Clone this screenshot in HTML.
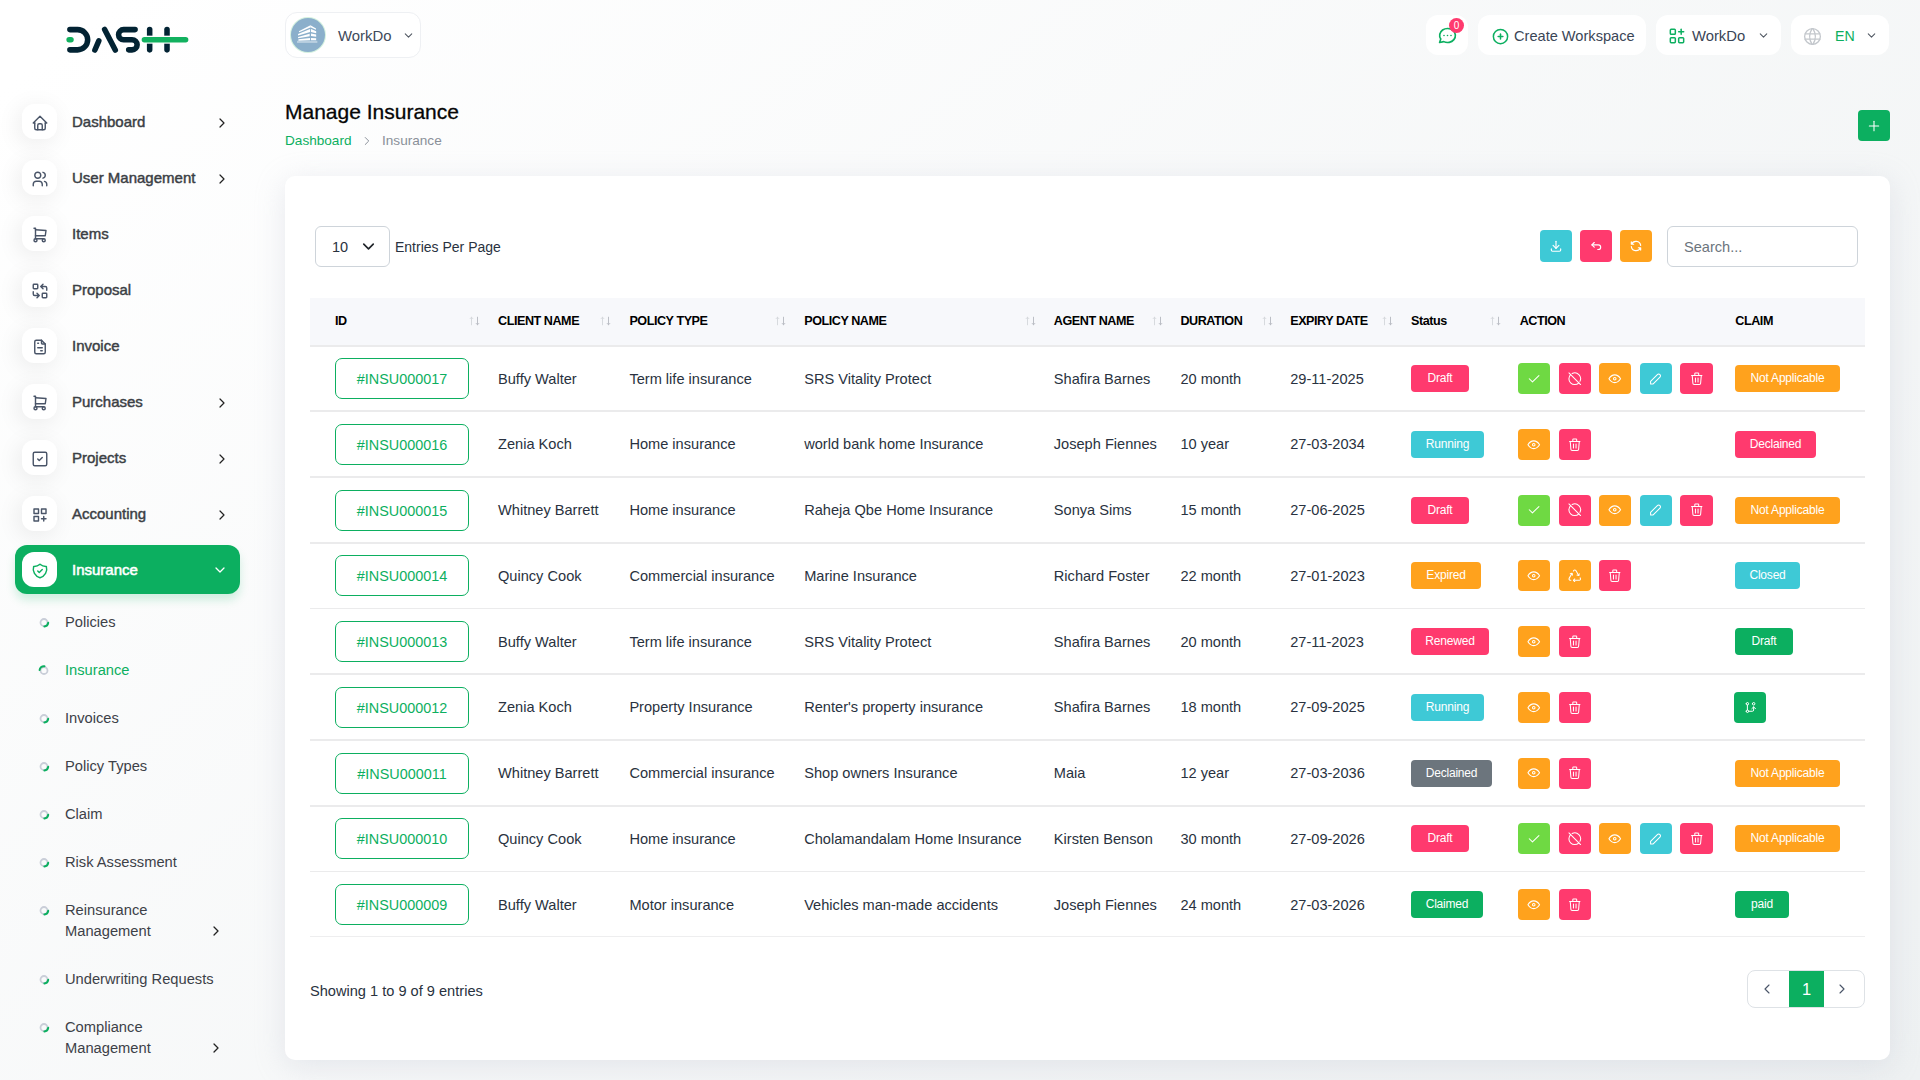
<!DOCTYPE html><html><head><meta charset="utf-8"><style>

*{box-sizing:border-box;margin:0;padding:0}
html,body{width:1920px;height:1080px;overflow:hidden}
body{font-family:"Liberation Sans", sans-serif;color:#293240;position:relative;
background:linear-gradient(141.55deg, #ffffff 3.46%, #eef1f2 99.86%);}
.abs{position:absolute}
.mi{position:absolute;left:22px;width:35px;height:35px;border-radius:12px;background:#fff;
box-shadow:-3px 4px 23px rgba(0,0,0,0.08);display:flex;align-items:center;justify-content:center}
.mt{position:absolute;left:72px;font-size:15px;font-weight:400;-webkit-text-stroke:0.45px #3b3f45;color:#3b3f45;white-space:nowrap;line-height:20px;letter-spacing:0px}
.ma{position:absolute;left:213px}
.st{position:absolute;left:65px;font-size:14.7px;color:#3d4148;white-space:nowrap;line-height:21px}
.dot{position:absolute;left:40px;width:8px;height:8px;border-radius:50%;border:1.7px solid #cdd1d9}
.tb{position:absolute;top:15px;height:40px;background:#fff;border-radius:12px;display:flex;align-items:center}
.card{position:absolute;left:285px;top:176px;width:1605px;height:884px;background:#fff;border-radius:10px;
box-shadow:0 6px 30px rgba(182,186,203,0.3)}
.th{position:absolute;top:298px;height:47px;font-size:12.6px;font-weight:700;color:#000;line-height:47px;white-space:nowrap;letter-spacing:-0.45px}
.srt{position:absolute;top:0;font-size:10px;color:#b9bec6;font-weight:400;letter-spacing:-1px}
.row{position:absolute;left:310px;width:1555px;height:2px;background:#ebebec}
.td{position:absolute;font-size:14.6px;color:#293240;white-space:nowrap;line-height:20px}
.idb{position:absolute;left:335px;width:134px;height:41px;border:1.3px solid #0caf60;border-radius:7px;color:#0caf60;
font-size:14.4px;line-height:40px;text-align:center}
.bdg{position:absolute;height:27px;border-radius:4px;color:#fff;font-size:12px;line-height:27px;text-align:center;white-space:nowrap;letter-spacing:-0.2px}
.ab{position:absolute;width:32px;height:31px;border-radius:4px;display:flex;align-items:center;justify-content:center}

</style></head><body>
<svg class="abs" style="left:60px;top:20px" width="140" height="40" viewBox="0 0 1920 549">
<g fill="none" stroke-linecap="round" stroke-width="76">
<path stroke="#022333" d="M135 132 H240 A139 139 0 0 1 240 410 H135"/>
<path stroke="#022333" d="M478 412 L532 287"/>
<path stroke="#022333" d="M612 130 L758 412"/>
<path stroke="#022333" d="M1030 132 H872 A69 69 0 0 0 872 270 H988 A70 70 0 0 1 988 410 H942"/>
<path stroke="#022333" d="M1230 132 V410"/>
<path stroke="#022333" d="M1468 132 V410"/>
<path stroke="#fdfdfd" stroke-width="110" d="M1180 270 H1520" stroke-linecap="butt"/>
<path stroke="#12b15f" d="M1158 272 H1723"/>
<path stroke="#12b15f" d="M125 272 H150"/>
</g></svg>
<div class="mi" style="top:104px"><div style="margin-top:2px;height:18px"><svg width="18" height="18" viewBox="0 0 24 24" fill="none" stroke="#4a5568" stroke-width="1.9" stroke-linecap="round" stroke-linejoin="round" ><path d="M5 12l-2 0l9 -9l9 9l-2 0"/><path d="M5 12v7a2 2 0 0 0 2 2h10a2 2 0 0 0 2 -2v-7"/><path d="M9 21v-6a2 2 0 0 1 2 -2h2a2 2 0 0 1 2 2v6"/></svg></div></div>
<div class="mt" style="top:112px">Dashboard</div>
<div class="ma" style="top:115px;left:213.75px"><svg width="16" height="16" viewBox="0 0 24 24" fill="none" stroke="#222" stroke-width="1.8" stroke-linecap="round" stroke-linejoin="round" ><path d="M9 6l6 6l-6 6"/></svg></div>
<div class="mi" style="top:160px"><div style="margin-top:2px;height:18px"><svg width="18" height="18" viewBox="0 0 24 24" fill="none" stroke="#4a5568" stroke-width="1.9" stroke-linecap="round" stroke-linejoin="round" ><path d="M9 7m-4 0a4 4 0 1 0 8 0a4 4 0 1 0 -8 0"/><path d="M3 21v-2a4 4 0 0 1 4 -4h4a4 4 0 0 1 4 4v2"/><path d="M16 3.13a4 4 0 0 1 0 7.75"/><path d="M21 21v-2a4 4 0 0 0 -3 -3.85"/></svg></div></div>
<div class="mt" style="top:168px">User Management</div>
<div class="ma" style="top:171px;left:213.75px"><svg width="16" height="16" viewBox="0 0 24 24" fill="none" stroke="#222" stroke-width="1.8" stroke-linecap="round" stroke-linejoin="round" ><path d="M9 6l6 6l-6 6"/></svg></div>
<div class="mi" style="top:216px"><div style="margin-top:2px;height:18px"><svg width="18" height="18" viewBox="0 0 24 24" fill="none" stroke="#4a5568" stroke-width="1.9" stroke-linecap="round" stroke-linejoin="round" ><path d="M6 19m-2 0a2 2 0 1 0 4 0a2 2 0 1 0 -4 0"/><path d="M17 19m-2 0a2 2 0 1 0 4 0a2 2 0 1 0 -4 0"/><path d="M17 17h-11v-14h-2"/><path d="M6 5l14 1l-1 7h-13"/></svg></div></div>
<div class="mt" style="top:224px">Items</div>
<div class="mi" style="top:272px"><div style="margin-top:2px;height:18px"><svg width="18" height="18" viewBox="0 0 24 24" fill="none" stroke="#4a5568" stroke-width="1.9" stroke-linecap="round" stroke-linejoin="round" ><path d="M3 3m0 1a1 1 0 0 1 1 -1h4a1 1 0 0 1 1 1v4a1 1 0 0 1 -1 1h-4a1 1 0 0 1 -1 -1z"/><path d="M15 15m0 1a1 1 0 0 1 1 -1h4a1 1 0 0 1 1 1v4a1 1 0 0 1 -1 1h-4a1 1 0 0 1 -1 -1z"/><path d="M21 11v-3a2 2 0 0 0 -2 -2h-6l3 3m0 -6l-3 3"/><path d="M3 13v3a2 2 0 0 0 2 2h6l-3 -3m0 6l3 -3"/></svg></div></div>
<div class="mt" style="top:280px">Proposal</div>
<div class="mi" style="top:328px"><div style="margin-top:2px;height:18px"><svg width="18" height="18" viewBox="0 0 24 24" fill="none" stroke="#4a5568" stroke-width="1.9" stroke-linecap="round" stroke-linejoin="round" ><path d="M14 3v4a1 1 0 0 0 1 1h4"/><path d="M17 21h-10a2 2 0 0 1 -2 -2v-14a2 2 0 0 1 2 -2h7l5 5v11a2 2 0 0 1 -2 2z"/><path d="M9 7l1 0"/><path d="M9 13l6 0"/><path d="M13 17l2 0"/></svg></div></div>
<div class="mt" style="top:336px">Invoice</div>
<div class="mi" style="top:384px"><div style="margin-top:2px;height:18px"><svg width="18" height="18" viewBox="0 0 24 24" fill="none" stroke="#4a5568" stroke-width="1.9" stroke-linecap="round" stroke-linejoin="round" ><path d="M6 19m-2 0a2 2 0 1 0 4 0a2 2 0 1 0 -4 0"/><path d="M17 19m-2 0a2 2 0 1 0 4 0a2 2 0 1 0 -4 0"/><path d="M17 17h-11v-14h-2"/><path d="M6 5l14 1l-1 7h-13"/></svg></div></div>
<div class="mt" style="top:392px">Purchases</div>
<div class="ma" style="top:395px;left:213.75px"><svg width="16" height="16" viewBox="0 0 24 24" fill="none" stroke="#222" stroke-width="1.8" stroke-linecap="round" stroke-linejoin="round" ><path d="M9 6l6 6l-6 6"/></svg></div>
<div class="mi" style="top:440px"><div style="margin-top:2px;height:18px"><svg width="18" height="18" viewBox="0 0 24 24" fill="none" stroke="#4a5568" stroke-width="1.9" stroke-linecap="round" stroke-linejoin="round" ><path d="M3 5a2 2 0 0 1 2 -2h14a2 2 0 0 1 2 2v14a2 2 0 0 1 -2 2h-14a2 2 0 0 1 -2 -2v-14z"/><path d="M9 12l2 2l4 -4"/></svg></div></div>
<div class="mt" style="top:448px">Projects</div>
<div class="ma" style="top:451px;left:213.75px"><svg width="16" height="16" viewBox="0 0 24 24" fill="none" stroke="#222" stroke-width="1.8" stroke-linecap="round" stroke-linejoin="round" ><path d="M9 6l6 6l-6 6"/></svg></div>
<div class="mi" style="top:496px"><div style="margin-top:2px;height:18px"><svg width="18" height="18" viewBox="0 0 24 24" fill="none" stroke="#4a5568" stroke-width="1.9" stroke-linecap="round" stroke-linejoin="round" ><path d="M4 4h6v6h-6z"/><path d="M14 4h6v6h-6z"/><path d="M4 14h6v6h-6z"/><path d="M14 17h6m-3 -3v6"/></svg></div></div>
<div class="mt" style="top:504px">Accounting</div>
<div class="ma" style="top:507px;left:213.75px"><svg width="16" height="16" viewBox="0 0 24 24" fill="none" stroke="#222" stroke-width="1.8" stroke-linecap="round" stroke-linejoin="round" ><path d="M9 6l6 6l-6 6"/></svg></div>
<div class="abs" style="left:15px;top:545px;width:225px;height:49px;border-radius:12px;background:#0caf60;box-shadow:0 6px 10px rgba(12,175,96,0.18)"></div>
<div class="mi" style="top:552px;box-shadow:none"><div style="margin-top:2px;height:18px"><svg width="18" height="18" viewBox="0 0 24 24" fill="none" stroke="#0caf60" stroke-width="1.9" stroke-linecap="round" stroke-linejoin="round" ><path d="M9 12l2 2l4 -4"/><path d="M12 3a12 12 0 0 0 8.5 3a12 12 0 0 1 -8.5 15a12 12 0 0 1 -8.5 -15a12 12 0 0 0 8.5 -3"/></svg></div></div>
<div class="mt" style="top:560px;color:#fff;-webkit-text-stroke:0.55px #fff">Insurance</div>
<div class="ma" style="top:561.5px;left:212px"><svg width="16" height="16" viewBox="0 0 24 24" fill="none" stroke="#fff" stroke-width="1.9" stroke-linecap="round" stroke-linejoin="round" ><path d="M6 9l6 6l6 -6"/></svg></div>
<svg class="abs" style="left:37px;top:615.5px" width="14" height="14" viewBox="0 0 14 14"><circle cx="7" cy="6.5" r="3.5" fill="none" stroke="#c9ced8" stroke-width="1.8"/><path d="M11.2 6.8 A4.2 4.2 0 0 1 7.4 10.4" fill="none" stroke="#0caf60" stroke-width="2" stroke-linecap="round"/></svg>
<div class="st" style="top:611.7px;color:#3d4148">Policies</div>
<svg class="abs" style="left:37px;top:663.5px" width="14" height="14" viewBox="0 0 14 14"><circle cx="7" cy="6.5" r="3.5" fill="none" stroke="#c9ced8" stroke-width="1.8"/><path d="M7.5 2.2 A4.2 4.2 0 0 0 2.6 6.0" fill="none" stroke="#0caf60" stroke-width="2" stroke-linecap="round"/></svg>
<div class="st" style="top:659.7px;color:#0caf60">Insurance</div>
<svg class="abs" style="left:37px;top:711.5px" width="14" height="14" viewBox="0 0 14 14"><circle cx="7" cy="6.5" r="3.5" fill="none" stroke="#c9ced8" stroke-width="1.8"/><path d="M11.2 6.8 A4.2 4.2 0 0 1 7.4 10.4" fill="none" stroke="#0caf60" stroke-width="2" stroke-linecap="round"/></svg>
<div class="st" style="top:707.7px;color:#3d4148">Invoices</div>
<svg class="abs" style="left:37px;top:759.5px" width="14" height="14" viewBox="0 0 14 14"><circle cx="7" cy="6.5" r="3.5" fill="none" stroke="#c9ced8" stroke-width="1.8"/><path d="M11.2 6.8 A4.2 4.2 0 0 1 7.4 10.4" fill="none" stroke="#0caf60" stroke-width="2" stroke-linecap="round"/></svg>
<div class="st" style="top:755.7px;color:#3d4148">Policy Types</div>
<svg class="abs" style="left:37px;top:807.5px" width="14" height="14" viewBox="0 0 14 14"><circle cx="7" cy="6.5" r="3.5" fill="none" stroke="#c9ced8" stroke-width="1.8"/><path d="M11.2 6.8 A4.2 4.2 0 0 1 7.4 10.4" fill="none" stroke="#0caf60" stroke-width="2" stroke-linecap="round"/></svg>
<div class="st" style="top:803.7px;color:#3d4148">Claim</div>
<svg class="abs" style="left:37px;top:855.5px" width="14" height="14" viewBox="0 0 14 14"><circle cx="7" cy="6.5" r="3.5" fill="none" stroke="#c9ced8" stroke-width="1.8"/><path d="M11.2 6.8 A4.2 4.2 0 0 1 7.4 10.4" fill="none" stroke="#0caf60" stroke-width="2" stroke-linecap="round"/></svg>
<div class="st" style="top:851.7px;color:#3d4148">Risk Assessment</div>
<svg class="abs" style="left:37px;top:903.5px" width="14" height="14" viewBox="0 0 14 14"><circle cx="7" cy="6.5" r="3.5" fill="none" stroke="#c9ced8" stroke-width="1.8"/><path d="M11.2 6.8 A4.2 4.2 0 0 1 7.4 10.4" fill="none" stroke="#0caf60" stroke-width="2" stroke-linecap="round"/></svg>
<div class="st" style="top:899.7px;color:#3d4148">Reinsurance<br>Management</div>
<div class="ma" style="top:923px;left:208px"><svg width="16" height="16" viewBox="0 0 24 24" fill="none" stroke="#222" stroke-width="1.9" stroke-linecap="round" stroke-linejoin="round" ><path d="M9 6l6 6l-6 6"/></svg></div>
<svg class="abs" style="left:37px;top:972.5px" width="14" height="14" viewBox="0 0 14 14"><circle cx="7" cy="6.5" r="3.5" fill="none" stroke="#c9ced8" stroke-width="1.8"/><path d="M11.2 6.8 A4.2 4.2 0 0 1 7.4 10.4" fill="none" stroke="#0caf60" stroke-width="2" stroke-linecap="round"/></svg>
<div class="st" style="top:968.7px;color:#3d4148">Underwriting Requests</div>
<svg class="abs" style="left:37px;top:1020.5px" width="14" height="14" viewBox="0 0 14 14"><circle cx="7" cy="6.5" r="3.5" fill="none" stroke="#c9ced8" stroke-width="1.8"/><path d="M11.2 6.8 A4.2 4.2 0 0 1 7.4 10.4" fill="none" stroke="#0caf60" stroke-width="2" stroke-linecap="round"/></svg>
<div class="st" style="top:1016.7px;color:#3d4148">Compliance<br>Management</div>
<div class="ma" style="top:1040px;left:208px"><svg width="16" height="16" viewBox="0 0 24 24" fill="none" stroke="#222" stroke-width="1.9" stroke-linecap="round" stroke-linejoin="round" ><path d="M9 6l6 6l-6 6"/></svg></div>
<div class="tb" style="left:285px;top:12px;width:136px;height:46px;border:1px solid #eef0f3">
<div class="abs" style="left:5px;top:5px;width:34px;height:34px;border-radius:50%;background:#8bafcb;box-shadow:0 0 0 1px #d4f1df"></div>
<svg class="abs" style="left:3px;top:3px" width="38" height="38" viewBox="0 0 1080 1080"><g fill="#fff">
<polygon points="280,430 610,262 620,318 292,462"/><polygon points="610,262 768,352 768,392 610,318"/>
<polygon points="258,512 600,368 600,452 258,552"/><polygon points="625,372 772,430 772,488 625,452"/>
<polygon points="258,600 588,508 588,572 258,632"/><polygon points="625,500 772,525 772,592 625,570"/>
<polygon points="268,662 598,622 598,692 268,702"/><polygon points="625,624 772,632 772,692 625,692"/>
<rect x="228" y="705" width="578" height="60" fill-opacity="0.4"/></g></svg>
<div class="abs" style="left:52px;top:13px;font-size:14.9px;color:#404a5a;line-height:20px">WorkDo</div>
<div class="abs" style="left:116px;top:15px"><svg width="13" height="13" viewBox="0 0 24 24" fill="none" stroke="#4f5661" stroke-width="1.9" stroke-linecap="round" stroke-linejoin="round" ><path d="M6 9l6 6l6 -6"/></svg></div></div>
<div class="tb" style="left:1426px;width:42px"><div class="abs" style="left:11px;top:10px"><svg width="21" height="21" viewBox="0 0 24 24" fill="none" stroke="#0caf60" stroke-width="1.9" stroke-linecap="round" stroke-linejoin="round" ><path d="M3 20l1.3 -3.9c-2.324 -3.437 -1.426 -7.872 2.1 -10.374c3.526 -2.501 8.59 -2.296 11.845 .48c3.255 2.777 3.695 7.266 1.029 10.501c-2.666 3.235 -7.615 4.215 -11.574 2.293l-4.7 1"/><path d="M12 12l0 .01"/><path d="M8 12l0 .01"/><path d="M16 12l0 .01"/></svg></div>
<div class="abs" style="left:23px;top:2.5px;width:15px;height:15px;border-radius:50%;background:#ff3a6e;color:#fff;font-size:10px;line-height:15px;text-align:center">0</div></div>
<div class="tb" style="left:1478px;width:168px"><div class="abs" style="left:12.5px;top:11.5px"><svg width="19" height="19" viewBox="0 0 24 24" fill="none" stroke="#0caf60" stroke-width="1.9" stroke-linecap="round" stroke-linejoin="round" ><path d="M3 12a9 9 0 1 0 18 0a9 9 0 0 0 -18 0"/><path d="M9 12h6"/><path d="M12 9v6"/></svg></div>
<div class="abs" style="left:36px;top:11px;font-size:14.6px;color:#3a4556;line-height:20px;white-space:nowrap">Create Workspace</div></div>
<div class="tb" style="left:1656px;width:125px"><div class="abs" style="left:10.5px;top:10.5px"><svg width="20" height="20" viewBox="0 0 24 24" fill="none" stroke="#0caf60" stroke-width="1.8" stroke-linecap="round" stroke-linejoin="round" ><path d="M4 4m0 1a1 1 0 0 1 1 -1h4a1 1 0 0 1 1 1v4a1 1 0 0 1 -1 1h-4a1 1 0 0 1 -1 -1z"/><path d="M4 14m0 1a1 1 0 0 1 1 -1h4a1 1 0 0 1 1 1v4a1 1 0 0 1 -1 1h-4a1 1 0 0 1 -1 -1z"/><path d="M14 14m0 1a1 1 0 0 1 1 -1h4a1 1 0 0 1 1 1v4a1 1 0 0 1 -1 1h-4a1 1 0 0 1 -1 -1z"/><path d="M14 7l6 0"/><path d="M17 4l0 6"/></svg></div>
<div class="abs" style="left:36px;top:11px;font-size:14.8px;color:#3a4556;line-height:20px">WorkDo</div>
<div class="abs" style="left:101px;top:13px"><svg width="13" height="13" viewBox="0 0 24 24" fill="none" stroke="#4f5661" stroke-width="1.9" stroke-linecap="round" stroke-linejoin="round" ><path d="M6 9l6 6l6 -6"/></svg></div></div>
<div class="tb" style="left:1791px;width:98px"><div class="abs" style="left:10.5px;top:10.5px"><svg width="21" height="21" viewBox="0 0 24 24" fill="none" stroke="#c3c7cc" stroke-width="1.5" stroke-linecap="round" stroke-linejoin="round" ><path d="M3 12a9 9 0 1 0 18 0a9 9 0 0 0 -18 0"/><path d="M3.6 9h16.8"/><path d="M3.6 15h16.8"/><path d="M11.5 3a17 17 0 0 0 0 18"/><path d="M12.5 3a17 17 0 0 1 0 18"/></svg></div>
<div class="abs" style="left:44px;top:11px;font-size:14.2px;color:#0caf60;line-height:20px">EN</div>
<div class="abs" style="left:74px;top:13px"><svg width="13" height="13" viewBox="0 0 24 24" fill="none" stroke="#4f5661" stroke-width="1.9" stroke-linecap="round" stroke-linejoin="round" ><path d="M6 9l6 6l6 -6"/></svg></div></div>
<div class="abs" style="left:285px;top:99px;font-size:21px;color:#060606;-webkit-text-stroke:0.3px #060606;line-height:26px;white-space:nowrap">Manage Insurance</div>
<div class="abs" style="left:285px;top:132px;font-size:13.6px;color:#0caf60;line-height:18px">Dashboard</div>
<div class="abs" style="left:360px;top:133.5px"><svg width="14" height="14" viewBox="0 0 24 24" fill="none" stroke="#8a9099" stroke-width="1.7" stroke-linecap="round" stroke-linejoin="round" ><path d="M9 6l6 6l-6 6"/></svg></div>
<div class="abs" style="left:382px;top:132px;font-size:13.6px;color:#8a9099;line-height:18px">Insurance</div>
<div class="abs" style="left:1858px;top:110px;width:32px;height:31px;border-radius:4px;background:#0caf60;display:flex;align-items:center;justify-content:center"><svg width="16" height="16" viewBox="0 0 24 24" fill="none" stroke="#fff" stroke-width="1.6" stroke-linecap="round" stroke-linejoin="round" ><path d="M12 5l0 14"/><path d="M5 12l14 0"/></svg></div>
<div class="card"></div>
<div class="abs" style="left:315px;top:226px;width:75px;height:41px;border:1px solid #ced4da;border-radius:6px">
<div class="abs" style="left:16px;top:10px;font-size:14.5px;line-height:20px;color:#293240">10</div>
<div class="abs" style="left:42.5px;top:9.5px"><svg width="19" height="19" viewBox="0 0 24 24" fill="none" stroke="#1f2329" stroke-width="2.1" stroke-linecap="round" stroke-linejoin="round" ><path d="M6 9l6 6l6 -6"/></svg></div></div>
<div class="abs" style="left:395px;top:237px;font-size:14px;line-height:20px;color:#293240;white-space:nowrap">Entries Per Page</div>
<div class="ab" style="left:1540px;top:230px;height:32px;background:#3ec9d6"><svg width="14" height="14" viewBox="0 0 24 24" fill="none" stroke="#fff" stroke-width="2" stroke-linecap="round" stroke-linejoin="round" ><path d="M4 17v2a2 2 0 0 0 2 2h12a2 2 0 0 0 2 -2v-2"/><path d="M7 11l5 5l5 -5"/><path d="M12 4l0 12"/></svg></div>
<div class="ab" style="left:1580px;top:230px;height:32px;background:#ff3a6e"><svg width="14" height="14" viewBox="0 0 24 24" fill="none" stroke="#fff" stroke-width="2" stroke-linecap="round" stroke-linejoin="round" ><path d="M9 14l-4 -4l4 -4"/><path d="M5 10h11a4 4 0 1 1 0 8h-1"/></svg></div>
<div class="ab" style="left:1620px;top:230px;height:32px;background:#ffa21d"><svg width="14" height="14" viewBox="0 0 24 24" fill="none" stroke="#fff" stroke-width="2" stroke-linecap="round" stroke-linejoin="round" ><path d="M20 11a8.1 8.1 0 0 0 -15.5 -2m-.5 -4v4h4"/><path d="M4 13a8.1 8.1 0 0 0 15.5 2m.5 4v-4h-4"/></svg></div>
<div class="abs" style="left:1667px;top:226px;width:191px;height:41px;border:1px solid #ced4da;border-radius:6px"><div class="abs" style="left:16px;top:10px;font-size:14.6px;line-height:20px;color:#6c757d">Search...</div></div>
<div class="abs" style="left:310px;top:298px;width:1555px;height:47px;background:#f7f8fb"></div>
<div class="row" style="top:345px"></div>
<div class="th" style="left:335px">ID</div>
<svg class="abs" style="left:468.5px;top:316px" width="11" height="10" viewBox="0 0 11 10" fill="none" stroke-width="0.95" stroke-linecap="round" stroke-linejoin="round"><path d="M2.5 8.8V1.2M1.2 2.6L2.5 1.2L3.8 2.6" stroke="#d5d8dc"/><path d="M8.5 1.2V8.8M7.2 7.4L8.5 8.8L9.8 7.4" stroke="#b8bcc3"/></svg>
<div class="th" style="left:498px">CLIENT NAME</div>
<svg class="abs" style="left:599.9px;top:316px" width="11" height="10" viewBox="0 0 11 10" fill="none" stroke-width="0.95" stroke-linecap="round" stroke-linejoin="round"><path d="M2.5 8.8V1.2M1.2 2.6L2.5 1.2L3.8 2.6" stroke="#d5d8dc"/><path d="M8.5 1.2V8.8M7.2 7.4L8.5 8.8L9.8 7.4" stroke="#b8bcc3"/></svg>
<div class="th" style="left:629.4px">POLICY TYPE</div>
<svg class="abs" style="left:774.9px;top:316px" width="11" height="10" viewBox="0 0 11 10" fill="none" stroke-width="0.95" stroke-linecap="round" stroke-linejoin="round"><path d="M2.5 8.8V1.2M1.2 2.6L2.5 1.2L3.8 2.6" stroke="#d5d8dc"/><path d="M8.5 1.2V8.8M7.2 7.4L8.5 8.8L9.8 7.4" stroke="#b8bcc3"/></svg>
<div class="th" style="left:804.2px">POLICY NAME</div>
<svg class="abs" style="left:1025.2px;top:316px" width="11" height="10" viewBox="0 0 11 10" fill="none" stroke-width="0.95" stroke-linecap="round" stroke-linejoin="round"><path d="M2.5 8.8V1.2M1.2 2.6L2.5 1.2L3.8 2.6" stroke="#d5d8dc"/><path d="M8.5 1.2V8.8M7.2 7.4L8.5 8.8L9.8 7.4" stroke="#b8bcc3"/></svg>
<div class="th" style="left:1053.8px">AGENT NAME</div>
<svg class="abs" style="left:1151.5px;top:316px" width="11" height="10" viewBox="0 0 11 10" fill="none" stroke-width="0.95" stroke-linecap="round" stroke-linejoin="round"><path d="M2.5 8.8V1.2M1.2 2.6L2.5 1.2L3.8 2.6" stroke="#d5d8dc"/><path d="M8.5 1.2V8.8M7.2 7.4L8.5 8.8L9.8 7.4" stroke="#b8bcc3"/></svg>
<div class="th" style="left:1180.4px">DURATION</div>
<svg class="abs" style="left:1261.5px;top:316px" width="11" height="10" viewBox="0 0 11 10" fill="none" stroke-width="0.95" stroke-linecap="round" stroke-linejoin="round"><path d="M2.5 8.8V1.2M1.2 2.6L2.5 1.2L3.8 2.6" stroke="#d5d8dc"/><path d="M8.5 1.2V8.8M7.2 7.4L8.5 8.8L9.8 7.4" stroke="#b8bcc3"/></svg>
<div class="th" style="left:1290.2px">EXPIRY DATE</div>
<svg class="abs" style="left:1381.5px;top:316px" width="11" height="10" viewBox="0 0 11 10" fill="none" stroke-width="0.95" stroke-linecap="round" stroke-linejoin="round"><path d="M2.5 8.8V1.2M1.2 2.6L2.5 1.2L3.8 2.6" stroke="#d5d8dc"/><path d="M8.5 1.2V8.8M7.2 7.4L8.5 8.8L9.8 7.4" stroke="#b8bcc3"/></svg>
<div class="th" style="left:1411px">Status</div>
<svg class="abs" style="left:1490.0px;top:316px" width="11" height="10" viewBox="0 0 11 10" fill="none" stroke-width="0.95" stroke-linecap="round" stroke-linejoin="round"><path d="M2.5 8.8V1.2M1.2 2.6L2.5 1.2L3.8 2.6" stroke="#d5d8dc"/><path d="M8.5 1.2V8.8M7.2 7.4L8.5 8.8L9.8 7.4" stroke="#b8bcc3"/></svg>
<div class="th" style="left:1519.7px">ACTION</div>
<div class="th" style="left:1735.3px">CLAIM</div>
<div class="idb" style="top:358.1px">#INSU000017</div>
<div class="td" style="left:498px;top:368.6px">Buffy Walter</div>
<div class="td" style="left:629.4px;top:368.6px">Term life insurance</div>
<div class="td" style="left:804.2px;top:368.6px">SRS Vitality Protect</div>
<div class="td" style="left:1053.8px;top:368.6px">Shafira Barnes</div>
<div class="td" style="left:1180.4px;top:368.6px">20 month</div>
<div class="td" style="left:1290.2px;top:368.6px">29-11-2025</div>
<div class="bdg" style="left:1411px;top:365.1px;width:58px;background:#ff3a6e">Draft</div>
<div class="ab" style="left:1518.0px;top:363.1px;width:32px;background:#6fd943"><svg width="15.5" height="15.5" viewBox="0 0 24 24" fill="none" stroke="#fff" stroke-width="1.6" stroke-linecap="round" stroke-linejoin="round" ><path d="M5 12l5 5l10 -10"/></svg></div>
<div class="ab" style="left:1558.6px;top:363.1px;width:32px;background:#ff3a6e"><svg width="15.5" height="15.5" viewBox="0 0 24 24" fill="none" stroke="#fff" stroke-width="1.6" stroke-linecap="round" stroke-linejoin="round" ><path d="M20.042 16.045a9 9 0 0 0 -12.087 -12.087"/><path d="M5.637 5.635a9 9 0 1 0 12.725 12.73"/><path d="M3 3l18 18"/></svg></div>
<div class="ab" style="left:1599.2px;top:363.1px;width:32px;background:#ffa21d"><svg width="15.5" height="15.5" viewBox="0 0 24 24" fill="none" stroke="#fff" stroke-width="1.6" stroke-linecap="round" stroke-linejoin="round" ><path d="M10 12a2 2 0 1 0 4 0a2 2 0 0 0 -4 0"/><path d="M21 12c-2.4 4 -5.4 6 -9 6c-3.6 0 -6.6 -2 -9 -6c2.4 -4 5.4 -6 9 -6c3.6 0 6.6 2 9 6"/></svg></div>
<div class="ab" style="left:1639.8px;top:363.1px;width:32px;background:#3ec9d6"><svg width="15.5" height="15.5" viewBox="0 0 24 24" fill="none" stroke="#fff" stroke-width="1.6" stroke-linecap="round" stroke-linejoin="round" ><path d="M4 20h4l10.5 -10.5a2.828 2.828 0 1 0 -4 -4l-10.5 10.5v4"/></svg></div>
<div class="ab" style="left:1680.4px;top:363.1px;width:33px;background:#ff3a6e"><svg width="15.5" height="15.5" viewBox="0 0 24 24" fill="none" stroke="#fff" stroke-width="1.6" stroke-linecap="round" stroke-linejoin="round" ><path d="M4 7l16 0"/><path d="M10 11l0 6"/><path d="M14 11l0 6"/><path d="M5 7l1 12a2 2 0 0 0 2 2h8a2 2 0 0 0 2 -2l1 -12"/><path d="M9 7v-3a1 1 0 0 1 1 -1h4a1 1 0 0 1 1 1v3"/></svg></div>
<div class="bdg" style="left:1735px;top:365.1px;width:105px;background:#ffa21d">Not Applicable</div>
<div class="row" style="top:410.4px;height:1.8px;"></div>
<div class="idb" style="top:423.9px">#INSU000016</div>
<div class="td" style="left:498px;top:434.4px">Zenia Koch</div>
<div class="td" style="left:629.4px;top:434.4px">Home insurance</div>
<div class="td" style="left:804.2px;top:434.4px">world bank home Insurance</div>
<div class="td" style="left:1053.8px;top:434.4px">Joseph Fiennes</div>
<div class="td" style="left:1180.4px;top:434.4px">10 year</div>
<div class="td" style="left:1290.2px;top:434.4px">27-03-2034</div>
<div class="bdg" style="left:1411px;top:430.9px;width:73px;background:#3ec9d6">Running</div>
<div class="ab" style="left:1518.0px;top:428.9px;width:32px;background:#ffa21d"><svg width="15.5" height="15.5" viewBox="0 0 24 24" fill="none" stroke="#fff" stroke-width="1.6" stroke-linecap="round" stroke-linejoin="round" ><path d="M10 12a2 2 0 1 0 4 0a2 2 0 0 0 -4 0"/><path d="M21 12c-2.4 4 -5.4 6 -9 6c-3.6 0 -6.6 -2 -9 -6c2.4 -4 5.4 -6 9 -6c3.6 0 6.6 2 9 6"/></svg></div>
<div class="ab" style="left:1558.6px;top:428.9px;width:32px;background:#ff3a6e"><svg width="15.5" height="15.5" viewBox="0 0 24 24" fill="none" stroke="#fff" stroke-width="1.6" stroke-linecap="round" stroke-linejoin="round" ><path d="M4 7l16 0"/><path d="M10 11l0 6"/><path d="M14 11l0 6"/><path d="M5 7l1 12a2 2 0 0 0 2 2h8a2 2 0 0 0 2 -2l1 -12"/><path d="M9 7v-3a1 1 0 0 1 1 -1h4a1 1 0 0 1 1 1v3"/></svg></div>
<div class="bdg" style="left:1735px;top:430.9px;width:81px;background:#ff3a6e">Declained</div>
<div class="row" style="top:476.2px;height:1.8px;"></div>
<div class="idb" style="top:489.6px">#INSU000015</div>
<div class="td" style="left:498px;top:500.1px">Whitney Barrett</div>
<div class="td" style="left:629.4px;top:500.1px">Home insurance</div>
<div class="td" style="left:804.2px;top:500.1px">Raheja Qbe Home Insurance</div>
<div class="td" style="left:1053.8px;top:500.1px">Sonya Sims</div>
<div class="td" style="left:1180.4px;top:500.1px">15 month</div>
<div class="td" style="left:1290.2px;top:500.1px">27-06-2025</div>
<div class="bdg" style="left:1411px;top:496.6px;width:58px;background:#ff3a6e">Draft</div>
<div class="ab" style="left:1518.0px;top:494.6px;width:32px;background:#6fd943"><svg width="15.5" height="15.5" viewBox="0 0 24 24" fill="none" stroke="#fff" stroke-width="1.6" stroke-linecap="round" stroke-linejoin="round" ><path d="M5 12l5 5l10 -10"/></svg></div>
<div class="ab" style="left:1558.6px;top:494.6px;width:32px;background:#ff3a6e"><svg width="15.5" height="15.5" viewBox="0 0 24 24" fill="none" stroke="#fff" stroke-width="1.6" stroke-linecap="round" stroke-linejoin="round" ><path d="M20.042 16.045a9 9 0 0 0 -12.087 -12.087"/><path d="M5.637 5.635a9 9 0 1 0 12.725 12.73"/><path d="M3 3l18 18"/></svg></div>
<div class="ab" style="left:1599.2px;top:494.6px;width:32px;background:#ffa21d"><svg width="15.5" height="15.5" viewBox="0 0 24 24" fill="none" stroke="#fff" stroke-width="1.6" stroke-linecap="round" stroke-linejoin="round" ><path d="M10 12a2 2 0 1 0 4 0a2 2 0 0 0 -4 0"/><path d="M21 12c-2.4 4 -5.4 6 -9 6c-3.6 0 -6.6 -2 -9 -6c2.4 -4 5.4 -6 9 -6c3.6 0 6.6 2 9 6"/></svg></div>
<div class="ab" style="left:1639.8px;top:494.6px;width:32px;background:#3ec9d6"><svg width="15.5" height="15.5" viewBox="0 0 24 24" fill="none" stroke="#fff" stroke-width="1.6" stroke-linecap="round" stroke-linejoin="round" ><path d="M4 20h4l10.5 -10.5a2.828 2.828 0 1 0 -4 -4l-10.5 10.5v4"/></svg></div>
<div class="ab" style="left:1680.4px;top:494.6px;width:33px;background:#ff3a6e"><svg width="15.5" height="15.5" viewBox="0 0 24 24" fill="none" stroke="#fff" stroke-width="1.6" stroke-linecap="round" stroke-linejoin="round" ><path d="M4 7l16 0"/><path d="M10 11l0 6"/><path d="M14 11l0 6"/><path d="M5 7l1 12a2 2 0 0 0 2 2h8a2 2 0 0 0 2 -2l1 -12"/><path d="M9 7v-3a1 1 0 0 1 1 -1h4a1 1 0 0 1 1 1v3"/></svg></div>
<div class="bdg" style="left:1735px;top:496.6px;width:105px;background:#ffa21d">Not Applicable</div>
<div class="row" style="top:541.9px;height:1.8px;"></div>
<div class="idb" style="top:555.4px">#INSU000014</div>
<div class="td" style="left:498px;top:565.9px">Quincy Cook</div>
<div class="td" style="left:629.4px;top:565.9px">Commercial insurance</div>
<div class="td" style="left:804.2px;top:565.9px">Marine Insurance</div>
<div class="td" style="left:1053.8px;top:565.9px">Richard Foster</div>
<div class="td" style="left:1180.4px;top:565.9px">22 month</div>
<div class="td" style="left:1290.2px;top:565.9px">27-01-2023</div>
<div class="bdg" style="left:1411px;top:562.4px;width:70px;background:#ffa21d">Expired</div>
<div class="ab" style="left:1518.0px;top:560.4px;width:32px;background:#ffa21d"><svg width="15.5" height="15.5" viewBox="0 0 24 24" fill="none" stroke="#fff" stroke-width="1.6" stroke-linecap="round" stroke-linejoin="round" ><path d="M10 12a2 2 0 1 0 4 0a2 2 0 0 0 -4 0"/><path d="M21 12c-2.4 4 -5.4 6 -9 6c-3.6 0 -6.6 -2 -9 -6c2.4 -4 5.4 -6 9 -6c3.6 0 6.6 2 9 6"/></svg></div>
<div class="ab" style="left:1558.6px;top:560.4px;width:32px;background:#ffa21d"><svg width="15.5" height="15.5" viewBox="0 0 24 24" fill="none" stroke="#fff" stroke-width="1.6" stroke-linecap="round" stroke-linejoin="round" ><path d="M12 17l-2 2l2 2"/><path d="M10 19h9a2 2 0 0 0 1.75 -2.75l-.55 -1"/><path d="M8.536 11l-.732 -2.732l-2.732 .732"/><path d="M7.804 8.268l-4.5 7.794a2 2 0 0 0 1.506 2.89l1.141 .024"/><path d="M15.464 11l2.732 .732l.732 -2.732"/><path d="M18.196 11.732l-4.5 -7.794a2 2 0 0 0 -3.256 -.14l-.591 .976"/></svg></div>
<div class="ab" style="left:1599.2px;top:560.4px;width:32px;background:#ff3a6e"><svg width="15.5" height="15.5" viewBox="0 0 24 24" fill="none" stroke="#fff" stroke-width="1.6" stroke-linecap="round" stroke-linejoin="round" ><path d="M4 7l16 0"/><path d="M10 11l0 6"/><path d="M14 11l0 6"/><path d="M5 7l1 12a2 2 0 0 0 2 2h8a2 2 0 0 0 2 -2l1 -12"/><path d="M9 7v-3a1 1 0 0 1 1 -1h4a1 1 0 0 1 1 1v3"/></svg></div>
<div class="bdg" style="left:1735px;top:562.4px;width:65px;background:#3ec9d6">Closed</div>
<div class="row" style="top:607.6px;height:1.8px;"></div>
<div class="idb" style="top:621.1px">#INSU000013</div>
<div class="td" style="left:498px;top:631.6px">Buffy Walter</div>
<div class="td" style="left:629.4px;top:631.6px">Term life insurance</div>
<div class="td" style="left:804.2px;top:631.6px">SRS Vitality Protect</div>
<div class="td" style="left:1053.8px;top:631.6px">Shafira Barnes</div>
<div class="td" style="left:1180.4px;top:631.6px">20 month</div>
<div class="td" style="left:1290.2px;top:631.6px">27-11-2023</div>
<div class="bdg" style="left:1411px;top:628.1px;width:78px;background:#ff3a6e">Renewed</div>
<div class="ab" style="left:1518.0px;top:626.1px;width:32px;background:#ffa21d"><svg width="15.5" height="15.5" viewBox="0 0 24 24" fill="none" stroke="#fff" stroke-width="1.6" stroke-linecap="round" stroke-linejoin="round" ><path d="M10 12a2 2 0 1 0 4 0a2 2 0 0 0 -4 0"/><path d="M21 12c-2.4 4 -5.4 6 -9 6c-3.6 0 -6.6 -2 -9 -6c2.4 -4 5.4 -6 9 -6c3.6 0 6.6 2 9 6"/></svg></div>
<div class="ab" style="left:1558.6px;top:626.1px;width:32px;background:#ff3a6e"><svg width="15.5" height="15.5" viewBox="0 0 24 24" fill="none" stroke="#fff" stroke-width="1.6" stroke-linecap="round" stroke-linejoin="round" ><path d="M4 7l16 0"/><path d="M10 11l0 6"/><path d="M14 11l0 6"/><path d="M5 7l1 12a2 2 0 0 0 2 2h8a2 2 0 0 0 2 -2l1 -12"/><path d="M9 7v-3a1 1 0 0 1 1 -1h4a1 1 0 0 1 1 1v3"/></svg></div>
<div class="bdg" style="left:1735px;top:628.1px;width:58px;background:#0caf60">Draft</div>
<div class="row" style="top:673.4px;height:1.8px;"></div>
<div class="idb" style="top:686.9px">#INSU000012</div>
<div class="td" style="left:498px;top:697.4px">Zenia Koch</div>
<div class="td" style="left:629.4px;top:697.4px">Property Insurance</div>
<div class="td" style="left:804.2px;top:697.4px">Renter&#x27;s property insurance</div>
<div class="td" style="left:1053.8px;top:697.4px">Shafira Barnes</div>
<div class="td" style="left:1180.4px;top:697.4px">18 month</div>
<div class="td" style="left:1290.2px;top:697.4px">27-09-2025</div>
<div class="bdg" style="left:1411px;top:693.9px;width:73px;background:#3ec9d6">Running</div>
<div class="ab" style="left:1518.0px;top:691.9px;width:32px;background:#ffa21d"><svg width="15.5" height="15.5" viewBox="0 0 24 24" fill="none" stroke="#fff" stroke-width="1.6" stroke-linecap="round" stroke-linejoin="round" ><path d="M10 12a2 2 0 1 0 4 0a2 2 0 0 0 -4 0"/><path d="M21 12c-2.4 4 -5.4 6 -9 6c-3.6 0 -6.6 -2 -9 -6c2.4 -4 5.4 -6 9 -6c3.6 0 6.6 2 9 6"/></svg></div>
<div class="ab" style="left:1558.6px;top:691.9px;width:32px;background:#ff3a6e"><svg width="15.5" height="15.5" viewBox="0 0 24 24" fill="none" stroke="#fff" stroke-width="1.6" stroke-linecap="round" stroke-linejoin="round" ><path d="M4 7l16 0"/><path d="M10 11l0 6"/><path d="M14 11l0 6"/><path d="M5 7l1 12a2 2 0 0 0 2 2h8a2 2 0 0 0 2 -2l1 -12"/><path d="M9 7v-3a1 1 0 0 1 1 -1h4a1 1 0 0 1 1 1v3"/></svg></div>
<div class="ab" style="left:1734px;top:691.9px;background:#0caf60"><svg width="15" height="15" viewBox="0 0 24 24" fill="none" stroke="#fff" stroke-width="1.6" stroke-linecap="round" stroke-linejoin="round" ><path d="M7 18m-2 0a2 2 0 1 0 4 0a2 2 0 1 0 -4 0"/><path d="M7 6m-2 0a2 2 0 1 0 4 0a2 2 0 1 0 -4 0"/><path d="M17 6m-2 0a2 2 0 1 0 4 0a2 2 0 1 0 -4 0"/><path d="M7 8l0 8"/><path d="M9 18h6a2 2 0 0 0 2 -2v-5"/><path d="M14 14l3 -3l3 3"/></svg></div>
<div class="row" style="top:739.1px;height:1.8px;"></div>
<div class="idb" style="top:752.6px">#INSU000011</div>
<div class="td" style="left:498px;top:763.1px">Whitney Barrett</div>
<div class="td" style="left:629.4px;top:763.1px">Commercial insurance</div>
<div class="td" style="left:804.2px;top:763.1px">Shop owners Insurance</div>
<div class="td" style="left:1053.8px;top:763.1px">Maia</div>
<div class="td" style="left:1180.4px;top:763.1px">12 year</div>
<div class="td" style="left:1290.2px;top:763.1px">27-03-2036</div>
<div class="bdg" style="left:1411px;top:759.6px;width:81px;background:#6c757d">Declained</div>
<div class="ab" style="left:1518.0px;top:757.6px;width:32px;background:#ffa21d"><svg width="15.5" height="15.5" viewBox="0 0 24 24" fill="none" stroke="#fff" stroke-width="1.6" stroke-linecap="round" stroke-linejoin="round" ><path d="M10 12a2 2 0 1 0 4 0a2 2 0 0 0 -4 0"/><path d="M21 12c-2.4 4 -5.4 6 -9 6c-3.6 0 -6.6 -2 -9 -6c2.4 -4 5.4 -6 9 -6c3.6 0 6.6 2 9 6"/></svg></div>
<div class="ab" style="left:1558.6px;top:757.6px;width:32px;background:#ff3a6e"><svg width="15.5" height="15.5" viewBox="0 0 24 24" fill="none" stroke="#fff" stroke-width="1.6" stroke-linecap="round" stroke-linejoin="round" ><path d="M4 7l16 0"/><path d="M10 11l0 6"/><path d="M14 11l0 6"/><path d="M5 7l1 12a2 2 0 0 0 2 2h8a2 2 0 0 0 2 -2l1 -12"/><path d="M9 7v-3a1 1 0 0 1 1 -1h4a1 1 0 0 1 1 1v3"/></svg></div>
<div class="bdg" style="left:1735px;top:759.6px;width:105px;background:#ffa21d">Not Applicable</div>
<div class="row" style="top:804.9px;height:1.8px;"></div>
<div class="idb" style="top:818.4px">#INSU000010</div>
<div class="td" style="left:498px;top:828.9px">Quincy Cook</div>
<div class="td" style="left:629.4px;top:828.9px">Home insurance</div>
<div class="td" style="left:804.2px;top:828.9px">Cholamandalam Home Insurance</div>
<div class="td" style="left:1053.8px;top:828.9px">Kirsten Benson</div>
<div class="td" style="left:1180.4px;top:828.9px">30 month</div>
<div class="td" style="left:1290.2px;top:828.9px">27-09-2026</div>
<div class="bdg" style="left:1411px;top:825.4px;width:58px;background:#ff3a6e">Draft</div>
<div class="ab" style="left:1518.0px;top:823.4px;width:32px;background:#6fd943"><svg width="15.5" height="15.5" viewBox="0 0 24 24" fill="none" stroke="#fff" stroke-width="1.6" stroke-linecap="round" stroke-linejoin="round" ><path d="M5 12l5 5l10 -10"/></svg></div>
<div class="ab" style="left:1558.6px;top:823.4px;width:32px;background:#ff3a6e"><svg width="15.5" height="15.5" viewBox="0 0 24 24" fill="none" stroke="#fff" stroke-width="1.6" stroke-linecap="round" stroke-linejoin="round" ><path d="M20.042 16.045a9 9 0 0 0 -12.087 -12.087"/><path d="M5.637 5.635a9 9 0 1 0 12.725 12.73"/><path d="M3 3l18 18"/></svg></div>
<div class="ab" style="left:1599.2px;top:823.4px;width:32px;background:#ffa21d"><svg width="15.5" height="15.5" viewBox="0 0 24 24" fill="none" stroke="#fff" stroke-width="1.6" stroke-linecap="round" stroke-linejoin="round" ><path d="M10 12a2 2 0 1 0 4 0a2 2 0 0 0 -4 0"/><path d="M21 12c-2.4 4 -5.4 6 -9 6c-3.6 0 -6.6 -2 -9 -6c2.4 -4 5.4 -6 9 -6c3.6 0 6.6 2 9 6"/></svg></div>
<div class="ab" style="left:1639.8px;top:823.4px;width:32px;background:#3ec9d6"><svg width="15.5" height="15.5" viewBox="0 0 24 24" fill="none" stroke="#fff" stroke-width="1.6" stroke-linecap="round" stroke-linejoin="round" ><path d="M4 20h4l10.5 -10.5a2.828 2.828 0 1 0 -4 -4l-10.5 10.5v4"/></svg></div>
<div class="ab" style="left:1680.4px;top:823.4px;width:33px;background:#ff3a6e"><svg width="15.5" height="15.5" viewBox="0 0 24 24" fill="none" stroke="#fff" stroke-width="1.6" stroke-linecap="round" stroke-linejoin="round" ><path d="M4 7l16 0"/><path d="M10 11l0 6"/><path d="M14 11l0 6"/><path d="M5 7l1 12a2 2 0 0 0 2 2h8a2 2 0 0 0 2 -2l1 -12"/><path d="M9 7v-3a1 1 0 0 1 1 -1h4a1 1 0 0 1 1 1v3"/></svg></div>
<div class="bdg" style="left:1735px;top:825.4px;width:105px;background:#ffa21d">Not Applicable</div>
<div class="row" style="top:870.6px;height:1.8px;"></div>
<div class="idb" style="top:884.1px">#INSU000009</div>
<div class="td" style="left:498px;top:894.6px">Buffy Walter</div>
<div class="td" style="left:629.4px;top:894.6px">Motor insurance</div>
<div class="td" style="left:804.2px;top:894.6px">Vehicles man-made accidents</div>
<div class="td" style="left:1053.8px;top:894.6px">Joseph Fiennes</div>
<div class="td" style="left:1180.4px;top:894.6px">24 month</div>
<div class="td" style="left:1290.2px;top:894.6px">27-03-2026</div>
<div class="bdg" style="left:1411px;top:891.1px;width:72px;background:#0caf60">Claimed</div>
<div class="ab" style="left:1518.0px;top:889.1px;width:32px;background:#ffa21d"><svg width="15.5" height="15.5" viewBox="0 0 24 24" fill="none" stroke="#fff" stroke-width="1.6" stroke-linecap="round" stroke-linejoin="round" ><path d="M10 12a2 2 0 1 0 4 0a2 2 0 0 0 -4 0"/><path d="M21 12c-2.4 4 -5.4 6 -9 6c-3.6 0 -6.6 -2 -9 -6c2.4 -4 5.4 -6 9 -6c3.6 0 6.6 2 9 6"/></svg></div>
<div class="ab" style="left:1558.6px;top:889.1px;width:32px;background:#ff3a6e"><svg width="15.5" height="15.5" viewBox="0 0 24 24" fill="none" stroke="#fff" stroke-width="1.6" stroke-linecap="round" stroke-linejoin="round" ><path d="M4 7l16 0"/><path d="M10 11l0 6"/><path d="M14 11l0 6"/><path d="M5 7l1 12a2 2 0 0 0 2 2h8a2 2 0 0 0 2 -2l1 -12"/><path d="M9 7v-3a1 1 0 0 1 1 -1h4a1 1 0 0 1 1 1v3"/></svg></div>
<div class="bdg" style="left:1735px;top:891.1px;width:54px;background:#0caf60">paid</div>
<div class="row" style="top:936.4px;height:1px;background:#eeeeef"></div>
<div class="abs" style="left:310px;top:981px;font-size:14.6px;line-height:20px;color:#293240;white-space:nowrap">Showing 1 to 9 of 9 entries</div>
<div class="abs" style="left:1747px;top:970px;width:118px;height:38px;border:1px solid #dee2e6;border-radius:8px;overflow:hidden">
<div class="abs" style="left:11px;top:10px"><svg width="16" height="16" viewBox="0 0 24 24" fill="none" stroke="#4a5568" stroke-width="1.7" stroke-linecap="round" stroke-linejoin="round" ><path d="M15 6l-6 6l6 6"/></svg></div>
<div class="abs" style="left:41px;top:-1px;width:35px;height:38px;background:#0caf60;color:#fff;font-size:16.5px;line-height:38px;text-align:center">1</div>
<div class="abs" style="left:86px;top:10px"><svg width="16" height="16" viewBox="0 0 24 24" fill="none" stroke="#4a5568" stroke-width="1.7" stroke-linecap="round" stroke-linejoin="round" ><path d="M9 6l6 6l-6 6"/></svg></div></div>
</body></html>
